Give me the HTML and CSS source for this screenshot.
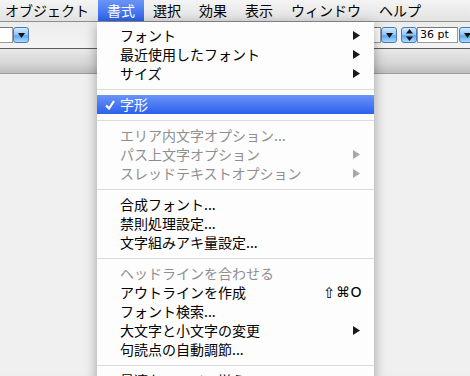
FILE: index.html
```html
<!DOCTYPE html>
<html lang="ja">

<head>
    <meta charset="UTF-8">
    <title>書式メニュー</title>
    <link rel="stylesheet" href="styles.css">
</head>

<body>
    <div class="menubar">
        <span class="title first">オブジェクト</span>
        <span class="title open">書式</span>
        <span class="title">選択</span>
        <span class="title">効果</span>
        <span class="title">表示</span>
        <span class="title">ウィンドウ</span>
        <span class="title">ヘルプ</span>
    </div>

    <div class="toolbar">
        <div class="group">
            <span class="field field-left"></span>
            <span class="aqua-btn"><svg width="7" height="5"><polygon points="0,0 7,0 3.5,5" /></svg></span>
        </div>
        <div class="group group-right">
            <span class="field field-short"></span>
            <span class="aqua-btn"><svg width="7" height="5"><polygon points="0,0 7,0 3.5,5" /></svg></span>
            <span class="aqua-btn stepper"><svg width="7" height="12"><polygon points="3.5,0 7,4.5 0,4.5" /><polygon points="0,7.5 7,7.5 3.5,12" /></svg></span>
            <span class="field field-size">36 pt</span>
            <span class="aqua-btn"><svg width="7" height="5"><polygon points="0,0 7,0 3.5,5" /></svg></span>
        </div>
    </div>

    <div class="tabbar"></div>
    <div class="canvas"></div>

    <div class="menu">
        <div class="item"><span>フォント</span><svg class="arrow" width="7" height="9"><polygon points="0,0 7,4.5 0,9" /></svg></div>
        <div class="item"><span>最近使用したフォント</span><svg class="arrow" width="7" height="9"><polygon points="0,0 7,4.5 0,9" /></svg></div>
        <div class="item"><span>サイズ</span><svg class="arrow" width="7" height="9"><polygon points="0,0 7,4.5 0,9" /></svg></div>
        <div class="sep"></div>
        <div class="item selected">
            <svg class="check" width="10" height="10"><polyline points="1,5.5 4,8.5 9,1" /></svg>
            <span>字形</span>
        </div>
        <div class="sep"></div>
        <div class="item disabled"><span>エリア内文字オプション...</span></div>
        <div class="item disabled"><span>パス上文字オプション</span><svg class="arrow" width="7" height="9"><polygon points="0,0 7,4.5 0,9" /></svg></div>
        <div class="item disabled"><span>スレッドテキストオプション</span><svg class="arrow" width="7" height="9"><polygon points="0,0 7,4.5 0,9" /></svg></div>
        <div class="sep"></div>
        <div class="item"><span>合成フォント...</span></div>
        <div class="item"><span>禁則処理設定...</span></div>
        <div class="item"><span>文字組みアキ量設定...</span></div>
        <div class="sep"></div>
        <div class="item disabled"><span>ヘッドラインを合わせる</span></div>
        <div class="item"><span>アウトラインを作成</span><span class="shortcut"><span class="shift">⇧</span>⌘O</span></div>
        <div class="item"><span>フォント検索...</span></div>
        <div class="item"><span>大文字と小文字の変更</span><svg class="arrow" width="7" height="9"><polygon points="0,0 7,4.5 0,9" /></svg></div>
        <div class="item"><span>句読点の自動調節...</span></div>
        <div class="sep"></div>
        <div class="item"><span>最適なマージン揃え</span></div>
    </div>
</body>

</html>
```

FILE: styles.css
```css
* {
    margin: 0;
    padding: 0;
    box-sizing: border-box;
}

body {
    width: 470px;
    height: 376px;
    overflow: hidden;
    position: relative;
    background-color: #efefef;
    font-family: "Noto Sans CJK JP", sans-serif;
    font-size: 14px;
    color: #000;
}

/* menu bar */
.menubar {
    height: 22px;
    display: flex;
    background: linear-gradient(#f4f4f4, #e2e2e2);
    border-bottom: 1px solid #8e8e8e;
    white-space: nowrap;
}

.title {
    padding: 0 9px;
    line-height: 21px;
}

.title.first {
    padding-left: 5px;
}

.title.open {
    color: #fff;
    background: linear-gradient(#6a95f7, #2d62ec);
}

/* control bar */
.toolbar {
    height: 27px;
    display: flex;
    justify-content: space-between;
    padding-top: 5px;
    background: linear-gradient(#ececec, #f4f4f4);
    border-bottom: 1px solid #5c5c5c;
}

.group {
    display: flex;
    height: 16px;
}

.group-right {
    margin-right: -9px;
}

.field {
    background: #fff;
    border: 1px solid #9a9a9a;
    border-top-color: #777;
    height: 16px;
}

.field-left {
    width: 13px;
    border-left: none;
}

.field-short {
    width: 30px;
}

.field-size {
    width: 41px;
    font-family: "DejaVu Sans", sans-serif;
    font-size: 11px;
    line-height: 14px;
    padding-left: 2px;
}

.aqua-btn {
    width: 16px;
    height: 16px;
    border: 1px solid #4a78b8;
    border-radius: 3px;
    background: linear-gradient(#d4ebff, #8cc3f7 50%, #5ea6ee 55%, #a9dcff);
    display: flex;
    align-items: center;
    justify-content: center;
    margin-right: 4px;
}

.group-right .aqua-btn:last-child {
    margin-left: 1px;
}

.stepper {
    margin-right: 0;
}

.aqua-btn polygon {
    fill: #111;
}

/* panel header strip */
.tabbar {
    height: 25px;
    background: linear-gradient(#e9e9e9, #d6d6d6 60%, #bdbdbd);
    border-bottom: 1px solid #9c9c9c;
}

.canvas {
    height: 300px;
    background-color: #f0f0f0;
}

/* open menu */
.menu {
    position: absolute;
    left: 97px;
    top: 22px;
    width: 277px;
    padding-top: 4px;
    background-color: #fdfdfd;
    box-shadow: 0 3px 12px rgba(0, 0, 0, 0.35);
}

.item {
    height: 19px;
    line-height: 19px;
    display: flex;
    align-items: center;
    justify-content: space-between;
    padding: 0 14px 0 23px;
    white-space: nowrap;
    position: relative;
}

.arrow polygon {
    fill: #1a1a1a;
}

.disabled {
    color: #8f8f8f;
}

.disabled .arrow polygon {
    fill: #a8a8a8;
}

.selected {
    color: #fff;
    background: linear-gradient(#6b94f8, #2c60ee);
}

.check {
    position: absolute;
    left: 8px;
    top: 5px;
}

.check polyline {
    fill: none;
    stroke: #fff;
    stroke-width: 2.2;
}

.shortcut {
    font-family: "DejaVu Sans", sans-serif;
    font-size: 14px;
    letter-spacing: 0.5px;
    margin-right: -2px;
}

.shift {
    font-size: 15px;
    position: relative;
    top: 1px;
}

.sep {
    height: 12px;
    display: flex;
    align-items: center;
}

.sep::after {
    content: "";
    flex: 1;
    height: 1px;
    background-color: #dcdcdc;
}
```
